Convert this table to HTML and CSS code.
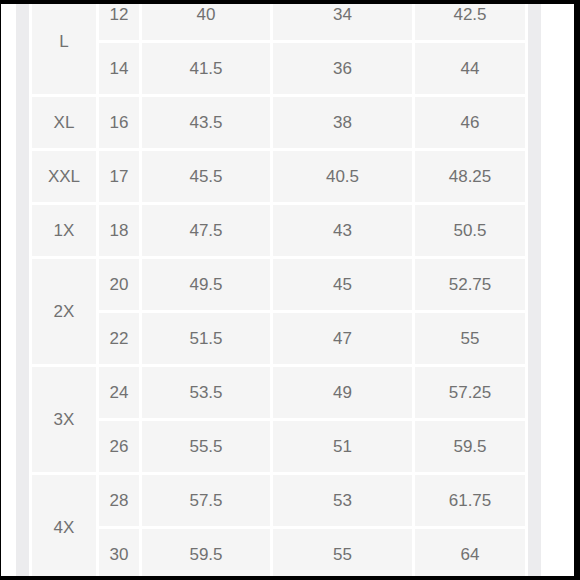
FILE: index.html
```html
<!DOCTYPE html>
<html>
<head>
<meta charset="utf-8">
<link rel="stylesheet" href="styles.css">
</head>
<body>
<div class="frame">
  <div class="chart">
    <div class="strip strip-left"></div>
    <div class="cell size span2">L</div>
    <div class="cell">12</div><div class="cell">40</div><div class="cell">34</div><div class="cell">42.5</div>
    <div class="cell">14</div><div class="cell">41.5</div><div class="cell">36</div><div class="cell">44</div>
    <div class="cell size">XL</div>
    <div class="cell">16</div><div class="cell">43.5</div><div class="cell">38</div><div class="cell">46</div>
    <div class="cell size">XXL</div>
    <div class="cell">17</div><div class="cell">45.5</div><div class="cell">40.5</div><div class="cell">48.25</div>
    <div class="cell size">1X</div>
    <div class="cell">18</div><div class="cell">47.5</div><div class="cell">43</div><div class="cell">50.5</div>
    <div class="cell size span2">2X</div>
    <div class="cell">20</div><div class="cell">49.5</div><div class="cell">45</div><div class="cell">52.75</div>
    <div class="cell">22</div><div class="cell">51.5</div><div class="cell">47</div><div class="cell">55</div>
    <div class="cell size span2">3X</div>
    <div class="cell">24</div><div class="cell">53.5</div><div class="cell">49</div><div class="cell">57.25</div>
    <div class="cell">26</div><div class="cell">55.5</div><div class="cell">51</div><div class="cell">59.5</div>
    <div class="cell size span2">4X</div>
    <div class="cell">28</div><div class="cell">57.5</div><div class="cell">53</div><div class="cell">61.75</div>
    <div class="cell">30</div><div class="cell">59.5</div><div class="cell">55</div><div class="cell">64</div>
    <div class="strip strip-right"></div>
  </div>
</div>
</body>
</html>
```
FILE: styles.css
```css
html, body {
  margin: 0;
  padding: 0;
}
body {
  background: #000;
  width: 580px;
  height: 580px;
  box-sizing: border-box;
  padding: 4px 6px 4px 1px;
  font-family: "Liberation Sans", Arial, sans-serif;
}
.frame {
  background: #fff;
  height: 572px;
  overflow: hidden;
}
.chart {
  display: grid;
  grid-template-columns: 13px 64px 40px 128px 139px 110px 13px;
  grid-auto-rows: 51px;
  gap: 3px;
  margin-top: -15px;
  margin-left: 15px;
}
.strip {
  background: #ececee;
  grid-row: 1 / 12;
}
.strip-left { grid-column: 1; }
.strip-right { grid-column: 7; }
.cell {
  background: #f5f5f5;
  color: #717171;
  font-size: 17px;
  display: flex;
  align-items: center;
  justify-content: center;
}
.size { grid-column: 2; }
.span2 { grid-row: span 2; }
```
